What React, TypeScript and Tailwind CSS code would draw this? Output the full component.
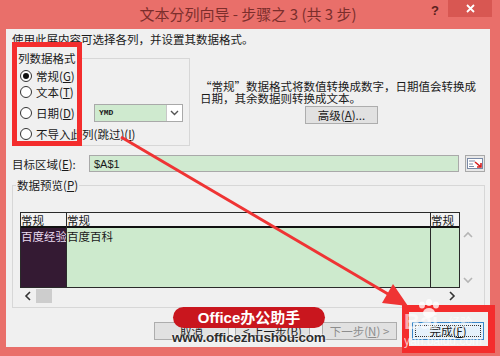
import React from 'react';

const cjk = { fontFamily: '"Noto Sans CJK SC", "Liberation Sans", sans-serif' };

function U({ c }: { c: string }) {
  return <span className="underline underline-offset-1">{c}</span>;
}

function Radio({ checked }: { checked?: boolean }) {
  return (
    <span className="w-[12px] h-[12px] rounded-full border border-[#333] bg-white flex items-center justify-center shrink-0">
      {checked && <span className="w-[6px] h-[6px] rounded-full bg-[#111]" />}
    </span>
  );
}

function Chevron({ dir }: { dir: 'up' | 'down' | 'left' | 'right' }) {
  const d = {
    up: 'M1 6 L5 2 L9 6',
    down: 'M1 2 L5 6 L9 2',
    left: 'M6 1 L2 5 L6 9',
    right: 'M2 1 L6 5 L2 9',
  }[dir];
  const vert = dir === 'up' || dir === 'down';
  return (
    <svg width={vert ? 10 : 8} height={vert ? 8 : 10} viewBox={vert ? '0 0 10 8' : '0 0 8 10'}>
      <path d={d} fill="none" stroke={dir === 'left' || dir === 'right' ? '#333' : '#b5b5b5'} strokeWidth="1.6" />
    </svg>
  );
}

function Btn({ children, className = '', disabled }: { children: React.ReactNode; className?: string; disabled?: boolean }) {
  return (
    <div
      className={`h-[18px] border border-[#adadad] bg-[#e1e1e1] flex items-center justify-center text-[11.5px] leading-[14px] ${
        disabled ? 'text-[#8d8d8d]' : 'text-[#1a1a1a]'
      } ${className}`}
    >
      {children}
    </div>
  );
}

export default function App() {
  return (
    <div className="relative w-[500px] h-[356px] bg-[#e96f6a] overflow-hidden text-[#1a1a1a]" style={cjk}>
      {/* Title bar */}
      <div className="flex h-[29px]">
        <div className="flex-1 pl-[67px] pt-[4px] text-center text-[15px] leading-[20px] text-[#7b2e2c]">
          文本分列向导 - 步骤之 3 (共 3 步)
        </div>
        <div className="w-[12px] pt-[1px] text-center text-[13px] font-bold text-[#5a1f1d]" style={{ fontFamily: '"Liberation Sans", sans-serif' }}>
          ?
        </div>
        <div className="ml-[7px] w-[44px] h-[17px] bg-[#d85752] flex items-center justify-center">
          <svg width="9" height="9" viewBox="0 0 9 9">
            <path d="M1 1 L8 8 M8 1 L1 8" stroke="#fff" strokeWidth="1.8" />
          </svg>
        </div>
        <div className="w-[8px]" />
      </div>

      {/* Dialog body */}
      <div className="mx-[6px] w-[484px] h-[318px] bg-[#f0f0f0] flex flex-col">
        <div className="pt-[3px] pl-[6px] text-[11.5px] leading-[14px] whitespace-nowrap">
          使用此屏内容可选择各列，并设置其数据格式。
        </div>

        <div className="mt-[12px] flex pl-[8px]">
          {/* 列数据格式 group */}
          <div className="relative w-[176px] h-[88px] border border-[#d7d7d7]">
            <div className="absolute left-[2px] -top-[8px] px-[1px] bg-[#f0f0f0] text-[11.5px] leading-[14px]">列数据格式</div>
            <div className="pt-[9px] pl-[5px] flex flex-col text-[11.5px] leading-[14px] whitespace-nowrap">
              <div className="h-[16px] flex items-center gap-[4px]">
                <Radio checked />
                <span>常规(<U c="G" />)</span>
              </div>
              <div className="h-[16px] flex items-center gap-[4px]">
                <Radio />
                <span>文本(<U c="T" />)</span>
              </div>
              <div className="mt-[4px] h-[18px] flex items-center">
                <Radio />
                <span className="ml-[4px] w-[58px]">日期(<U c="D" />)</span>
                <div className="w-[89px] h-[18px] border border-[#a9a9a9] bg-[#cfeacf] flex">
                  <span className="flex-1 pl-[4px] text-[8px] leading-[16px] font-bold" style={{ fontFamily: '"Liberation Mono", monospace' }}>
                    YMD
                  </span>
                  <span className="w-[16px] bg-white border-l border-[#c8c8c8] flex items-center justify-center">
                    <svg width="9" height="6" viewBox="0 0 9 6">
                      <path d="M1 1 L4.5 4.5 L8 1" fill="none" stroke="#555" strokeWidth="1.4" />
                    </svg>
                  </span>
                </div>
              </div>
              <div className="mt-[4px] h-[16px] flex items-center gap-[4px]">
                <Radio />
                <span>不导入此列(跳过)(<U c="I" />)</span>
              </div>
            </div>
          </div>

          {/* description */}
          <div className="ml-[10px] pt-[22px] flex flex-col">
            <div className="text-[11.5px] leading-[12px] whitespace-nowrap">
              “常规”数据格式将数值转换成数字，日期值会转换成
              <br />
              日期，其余数据则转换成文本。
            </div>
            <Btn className="mt-[2px] ml-[105px] w-[73px]">
              高级(<U c="A" />)...
            </Btn>
          </div>
        </div>

        {/* 目标区域 */}
        <div className="mt-[9px] flex items-center h-[17px] pl-[6px] text-[11.5px] leading-[14px]">
          <span className="w-[77px]">目标区域(<U c="E" />):</span>
          <div className="w-[370px] h-[17px] border border-[#a9a9a9] bg-[#d0ead0] pl-[4px] flex items-center" style={{ fontFamily: '"Liberation Sans", sans-serif' }}>
            <span className="text-[11px]">$A$1</span>
          </div>
          <div className="ml-[6px] w-[20px] h-[17px] border border-[#a9a9a9] bg-[#e8e8e8] flex items-center justify-center">
            <svg width="16" height="11" viewBox="0 0 16 11">
              <rect x="0.5" y="0.5" width="15" height="10" fill="#fff" stroke="#7a8aa6" />
              <path d="M2 3 H8 M2 6 H6 M2 8.5 H7" stroke="#7a8aa6" strokeWidth="1" />
              <path d="M8 4 L14 9 M10 9 L14 9 L14 5" fill="none" stroke="#d62020" strokeWidth="1.6" />
            </svg>
          </div>
        </div>

        {/* 数据预览 group */}
        <div className="mt-[13px] ml-[6px] relative w-[473px] h-[123px] border border-[#d7d7d7]">
          <div className="absolute left-[3px] -top-[8px] px-[1px] bg-[#f0f0f0] text-[11.5px] leading-[14px]">
            数据预览(<U c="P" />)
          </div>
          <div className="pt-[26px] pl-[7px] flex flex-col">
            <div className="flex">
              <div className="w-[440px] h-[76px] border border-[#2a2a2a] flex text-[11.5px] leading-[14px] whitespace-nowrap overflow-hidden">
                <div className="w-[46px] border-r border-[#2a2a2a] flex flex-col">
                  <div className="h-[15px] bg-[#f2f2f2] border-b-2 border-[#111]">常规</div>
                  <div className="flex-1 bg-[#341a33] text-[#eadcf0] pt-[1px] overflow-hidden">百度经验</div>
                </div>
                <div className="w-[364px] border-r border-[#2a2a2a] flex flex-col">
                  <div className="h-[15px] bg-[#f2f2f2] border-b-2 border-[#111]">常规</div>
                  <div className="flex-1 bg-[#cdeacd] pt-[1px]">百度百科</div>
                </div>
                <div className="flex-1 flex flex-col">
                  <div className="h-[15px] bg-[#f2f2f2] border-b-2 border-[#111]">常规</div>
                  <div className="flex-1 bg-[#cdeacd]" />
                </div>
              </div>
              <div className="w-[16px] h-[76px] flex flex-col items-center justify-between pt-[19px] pb-[4px]">
                <Chevron dir="up" />
                <Chevron dir="down" />
              </div>
            </div>
            <div className="w-[440px] h-[16px] flex items-center">
              <div className="w-[16px] flex justify-center">
                <Chevron dir="left" />
              </div>
              <div className="w-[16px] h-[14px] bg-[#cdcdcd]" />
              <div className="flex-1" />
              <div className="w-[16px] flex justify-center">
                <Chevron dir="right" />
              </div>
            </div>
          </div>
        </div>

        {/* buttons */}
        <div className="mt-[14px] flex">
          <Btn className="ml-[148px] w-[75px]">取消</Btn>
          <Btn className="ml-[6px] w-[75px]">
            &lt; 上一步(<U c="B" />)
          </Btn>
          <Btn className="ml-[12px] w-[75px]" disabled>
            下一步(<U c="N" />) &gt;
          </Btn>
          <div className="ml-[15px] w-[72px] h-[18px] border border-[#3a86c8] bg-[#e5f1fb] p-[2px]">
            <div className="w-full h-full border border-dotted border-[#333] flex items-center justify-center text-[11.5px] leading-[12px]">
              完成(<U c="F" />)
            </div>
          </div>
        </div>
      </div>

      {/* annotations laid over the dialog */}
      <div className="absolute left-[12px] top-[42px] w-[70px] h-[104px] border-[5px] border-[#f42d2d]" />
      <div className="absolute left-[402px] top-[305px] w-[93px] h-[48px] border-[7px] border-[#f42d2d]" />

      <svg className="absolute left-0 top-0" width="500" height="356" viewBox="0 0 500 356">
        <line x1="121" y1="137" x2="388" y2="294" stroke="#ef3434" strokeWidth="3" />
        <polygon points="408,306 393,284 382,303" fill="#ef3434" />
      </svg>

      {/* baidu watermark */}
      <div className="absolute left-[416px] top-[299px] opacity-80">
        <svg width="30" height="20" viewBox="0 0 30 20">
          <ellipse cx="6" cy="6" rx="3" ry="3.5" fill="#fff" />
          <ellipse cx="13" cy="3.5" rx="3" ry="3.5" fill="#fff" />
          <ellipse cx="20" cy="6" rx="3" ry="3.5" fill="#fff" />
          <ellipse cx="13" cy="14" rx="6" ry="5" fill="#fff" />
        </svg>
      </div>
      <div className="absolute left-[404px] top-[310px] text-[22px] leading-[24px] font-bold text-white opacity-60" style={{ fontFamily: '"Liberation Sans", sans-serif' }}>
        Bai<span className="text-[12px] font-normal align-top ml-[10px]" style={cjk}>经验</span>
      </div>
      <div className="absolute left-[404px] top-[334px] text-[12px] leading-[14px] text-white opacity-70" style={{ fontFamily: '"Liberation Sans", sans-serif' }}>
        yan.baidu.com
      </div>

      {/* site logo */}
      <div className="absolute left-[173px] top-[307px] w-[152px] h-[21px] rounded-full bg-[#c9161e] flex items-center justify-center text-white text-[15px] leading-[18px] font-bold" style={{ fontFamily: '"Liberation Sans", "Noto Sans CJK SC", sans-serif' }}>
        Office办公助手
      </div>
      <div
        className="absolute left-[172px] top-[330px] text-[13.5px] leading-[16px] font-bold text-[#2e2e2e] tracking-[-0.2px]"
        style={{ fontFamily: '"Liberation Sans", sans-serif', textShadow: '0 0 2px #fff, 0 0 2px #fff' }}
      >
        www.officezhushou.com
      </div>
    </div>
  );
}
